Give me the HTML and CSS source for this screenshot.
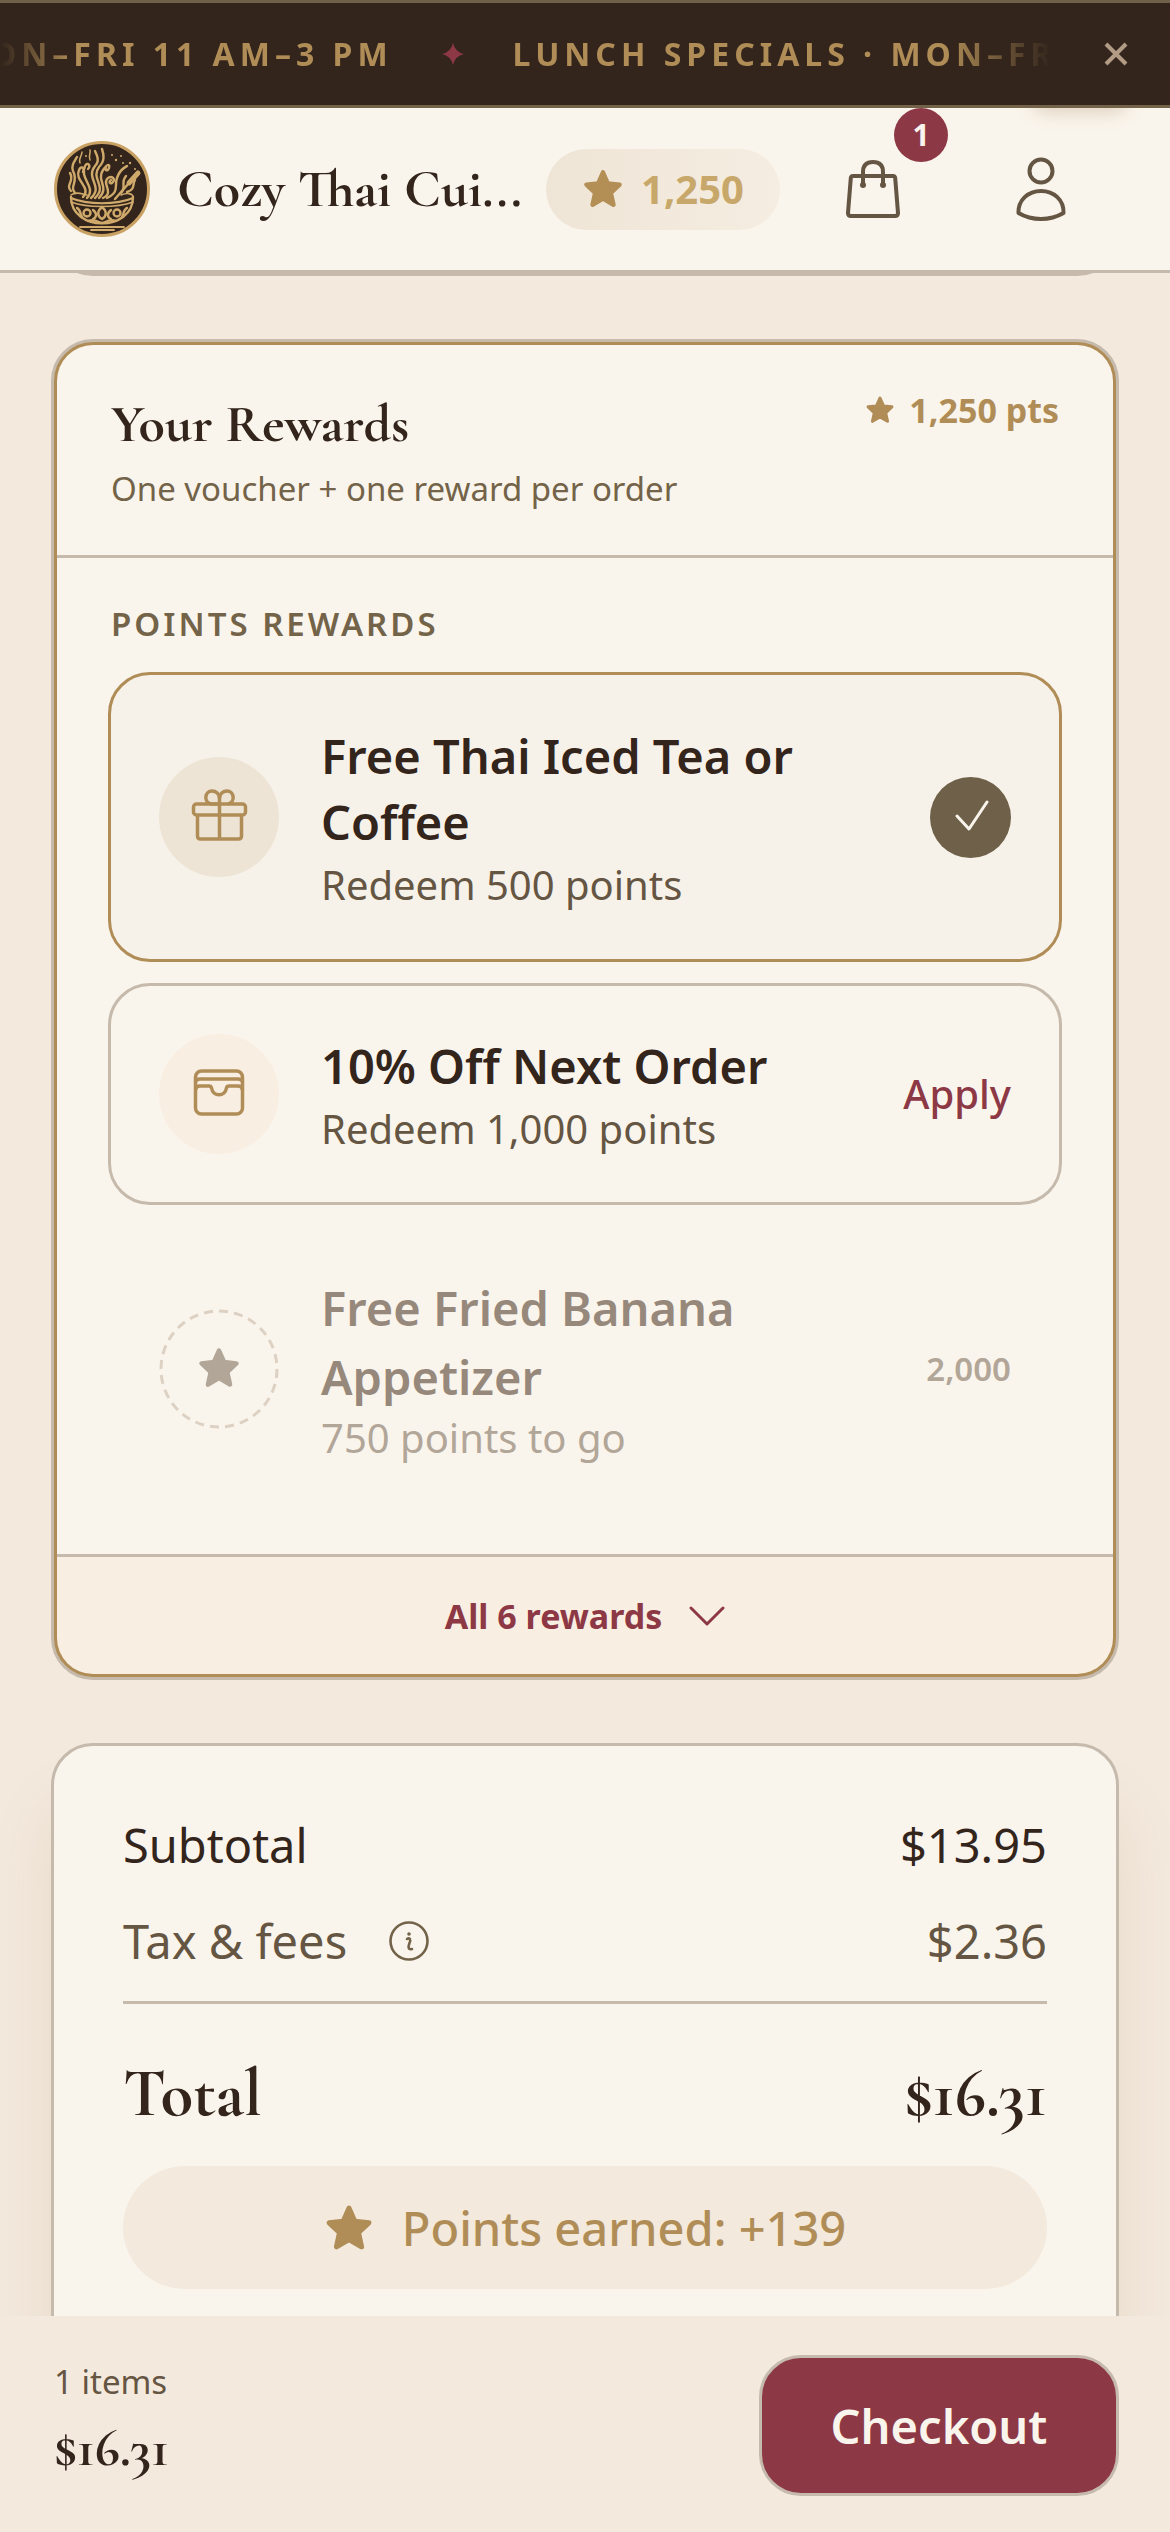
FILE: index.html
```html
<!DOCTYPE html>
<html lang="en">
<head>
  <meta charset="UTF-8">
  <meta name="viewport" content="width=device-width, initial-scale=1.0">
  <title>Cozy Thai Cuisine - Cart</title>
  <link rel="stylesheet" href="styles.css">
</head>
<body>

  <!-- shared shapes -->
  <svg class="defs" aria-hidden="true">
    <symbol id="star" viewBox="0 0 48 48">
      <path d="M24 5 L29.5 17.5 L43 19 L33 28.5 L36 42 L24 35 L12 42 L15 28.5 L5 19 L18.5 17.5 Z" fill="currentColor" stroke="currentColor" stroke-width="5" stroke-linejoin="round"/>
    </symbol>
  </svg>

  <div class="banner">
    <div class="ticker">
      <div class="ticker-track">
        <span>LUNCH SPECIALS · MON–FRI 11 AM–3 PM</span>
        <svg class="spark" viewBox="0 0 22 22"><path d="M11 0 Q13 9 22 11 Q13 13 11 22 Q9 13 0 11 Q9 9 11 0Z" fill="currentColor"/></svg>
        <span>LUNCH SPECIALS · MON–FRI 11 AM–3 PM</span>
      </div>
    </div>
    <button class="banner-close" type="button" aria-label="Close">
      <svg viewBox="0 0 24 24"><path d="M2 2 L22 22 M22 2 L2 22" fill="none" stroke="currentColor" stroke-width="4"/></svg>
    </button>
  </div>

  <header class="topbar">
    <svg class="logo" viewBox="0 0 96 96" aria-hidden="true">
      <circle cx="48" cy="48" r="46.5" fill="#33251c" stroke="#c9a263" stroke-width="3"/>
      <g fill="none" stroke="#d0aa6b" stroke-width="2.4" stroke-linecap="round">
        <path d="M29 56 C38 46 20 40 25 29 C27 24 31 27 29 31"/>
        <path d="M33 57 C43 46 25 38 31 25 C34 20 37 25 34 28"/>
        <path d="M37 57 C50 45 31 38 41 25 C46 20 43 14 41 10"/>
        <path d="M41 57 C54 45 36 38 45 26 C51 20 50 14 48 8"/>
        <path d="M45 57 C56 46 42 40 49 29 C54 22 56 23 55 27 C54 31 50 29 52 27"/>
        <path d="M49 57 C61 52 47 42 54 37 C59 34 62 39 58 42 C55 43 55 40 57 39"/>
        <path d="M53 57 C66 51 60 45 63 37 C66 28 70 27 73 25"/>
        <path d="M17 50 C11 44 21 40 16 32 M21 52 C15 45 25 41 19 30 C17 25 20 21 23 16"/>
        <path d="M67 52 C73 46 66 42 72 35 M73 51 C82 48 78 43 81 39"/>
        <path d="M26 22 C24 18 28 15 28 11 M36 19 C34 15 37 12 36 9" stroke-width="1.5"/>
        <path d="M61 58 L75 42"/>
        <path d="M75 42 L84 32" stroke-width="5"/>
        <path d="M17 54 C22 50 28 53 33 54 M67 54 C74 51 78 53 79 55" stroke-width="1.6"/>
        <path d="M17 57 C33 64 63 64 79 57" stroke-width="2.2"/>
        <path d="M17 61 C33 67 63 67 79 61" stroke-width="1.6"/>
        <path d="M17 56 C17 91 79 91 79 56"/>
        <path d="M48 66 C43 70 43 75 48 78 C53 75 53 70 48 66Z M39 69 C43 72 43 76 39 78 M57 69 C53 72 53 76 57 78"/>
        <circle cx="33" cy="72" r="3.5"/><circle cx="63" cy="72" r="3.5"/>
        <path d="M23 67 C26 68 26 72 28 76 M73 67 C70 68 70 72 68 76 M34 80 C42 77 44 82 48 82 C52 82 54 77 62 80"/>
        <path d="M26 86 H70 M37 89 H60" stroke-width="1.8"/>
      </g>
      <g fill="#d0aa6b">
        <circle cx="32" cy="15" r="1"/><circle cx="58" cy="14" r="1"/><circle cx="62" cy="19" r="1.2"/><circle cx="67" cy="15" r="1"/><circle cx="69" cy="22" r="1"/><circle cx="76" cy="22" r="1.2"/><circle cx="81" cy="28" r="1"/>
      </g>
    </svg>
    <h1 class="brand">Cozy Thai Cui...</h1>
    <a class="points-pill" href="#rewards"><svg class="star-md"><use href="#star"/></svg>1,250</a>
    <nav class="actions">
      <button class="icon-btn" type="button" aria-label="Cart">
        <svg viewBox="0 0 66 66"><g fill="none" stroke="currentColor" stroke-width="4" stroke-linecap="round" stroke-linejoin="round"><path d="M13 20 H53 Q55 20 55.200 22 L58 57 Q58 60 55 60 H11 Q8 60 8 57 L10.800 22 Q11 20 13 20Z"/><path d="M23 29 V16 Q23 6 33 6 Q43 6 43 16 V29"/></g><circle cx="23" cy="29" r="3" fill="currentColor"/><circle cx="43" cy="29" r="3" fill="currentColor"/></svg>
        <span class="badge">1</span>
      </button>
      <button class="icon-btn" type="button" aria-label="Account">
        <svg viewBox="0 0 66 66"><g fill="none" stroke="currentColor" stroke-width="4" stroke-linejoin="round"><circle cx="33" cy="15" r="11.500"/><path d="M10.500 57 C10 44 20 35 33 35 C46 35 56 44 55.500 57 C42 65 24 65 10.500 57Z"/></g></svg>
      </button>
    </nav>
  </header>

  <main>
    <div class="card prev-card"></div>

    <section class="rewards" id="rewards">
      <div class="rewards-head">
        <div>
          <h2>Your Rewards</h2>
          <p>One voucher + one reward per order</p>
        </div>
        <span class="rewards-pts"><svg class="star-sm"><use href="#star"/></svg>1,250 pts</span>
      </div>

      <div class="rewards-body">
        <h3>POINTS REWARDS</h3>
        <div class="reward selected">
          <span class="reward-icon">
            <svg viewBox="0 0 60 60"><g fill="none" stroke="currentColor" stroke-width="3.500" stroke-linejoin="round"><rect x="4.500" y="17" width="52" height="11" rx="3"/><path d="M8.500 28 V49 Q8.500 52 11.500 52 H49.500 Q52.500 52 52.500 49 V28 M30.500 8 V52"/><path d="M30.500 17 H22 C14 15 16 4 23 4 C27 4 30.500 7 30.500 11 C30.500 7 34 4 38 4 C45 4 47 15 39 17"/></g></svg>
          </span>
          <div class="reward-text">
            <h4>Free Thai Iced Tea or Coffee</h4>
            <p>Redeem 500 points</p>
          </div>
          <button class="check" type="button" aria-label="Remove reward"><svg viewBox="0 0 36 36"><path d="M4 17 L16 30 L34 3" fill="none" stroke="currentColor" stroke-width="3" stroke-linecap="round" stroke-linejoin="round"/></svg></button>
        </div>
        <div class="reward">
          <span class="reward-icon">
            <svg viewBox="0 0 60 60"><g fill="none" stroke="currentColor" stroke-width="3.500" stroke-linejoin="round"><rect x="6.500" y="7" width="47" height="43" rx="6"/><path d="M6.500 18 Q7 15 11 15 H49 Q53 15 53.500 18"/><path d="M6.500 26 Q7 22 11 22 H20 Q22 22 22.500 24 C24 33 36 33 37.500 24 Q38 22 40 22 H49 Q53 22 53.500 26"/></g></svg>
          </span>
          <div class="reward-text">
            <h4>10% Off Next Order</h4>
            <p>Redeem 1,000 points</p>
          </div>
          <button class="apply" type="button">Apply</button>
        </div>
        <div class="reward locked">
          <span class="reward-icon">
            <svg viewBox="0 0 120 120"><circle class="ring" cx="60" cy="60" r="58" pathLength="360"/><use href="#star" x="38" y="37" width="44" height="44"/></svg>
          </span>
          <div class="reward-text">
            <h4>Free Fried Banana Appetizer</h4>
            <p>750 points to go</p>
          </div>
          <span class="cost">2,000</span>
        </div>
      </div>

      <button class="all-rewards" type="button">All 6 rewards
        <svg viewBox="0 0 36 20"><path d="M2 2 L18 18 L34 2" fill="none" stroke="currentColor" stroke-width="3" stroke-linecap="round" stroke-linejoin="round"/></svg>
      </button>
    </section>

    <section class="card summary">
      <div class="row"><span>Subtotal</span><span>$13.95</span></div>
      <div class="row fees">
        <span class="fees-label">Tax &amp; fees
          <svg viewBox="0 0 42 42"><g fill="none" stroke="currentColor" stroke-width="2.600"><circle cx="21" cy="21" r="18.500"/><path d="M19 19 C22 17 23 20 21.500 23 C20 27 20 30 24 29" stroke-linecap="round"/></g><circle cx="21" cy="14" r="1.800" fill="currentColor"/></svg>
        </span>
        <span>$2.36</span>
      </div>
      <div class="total"><span>Total</span><span>$16.31</span></div>
      <div class="earned"><svg class="star-lg"><use href="#star"/></svg>Points earned: +139</div>
    </section>
  </main>

  <footer class="checkout-bar">
    <div>
      <p class="count">1 items</p>
      <p class="bar-price">$16.31</p>
    </div>
    <button class="checkout" type="button">Checkout</button>
  </footer>

</body>
</html>
```
FILE: styles.css
```css
* { box-sizing: border-box; }
body { margin: 0; background: #f3e9dd; color: #33251c; font-family: "Noto Sans", sans-serif; font-size: 47px; line-height: 66px; }
h1, h2, h3, h4, p { margin: 0; }
h1, h2, .total, .bar-price { font-family: "Cormorant Garamond", "Liberation Serif", serif; font-weight: 700; }
button { font-family: inherit; border: none; background: none; padding: 0; cursor: pointer; }
svg { display: block; flex-shrink: 0; }
.defs { position: absolute; width: 0; height: 0; }
.star-sm { width: 30px; height: 30px; }
.star-md { width: 42px; height: 42px; }
.star-lg { width: 50px; height: 50px; }

/* announcement */
.banner { position: relative; z-index: 3; display: flex; height: 108px; align-items: center; background: #33251c; border-top: 3px solid #6f6049; border-bottom: 3px solid #736349; }
.ticker { flex: 1; overflow: hidden; -webkit-mask-image: linear-gradient(to right, transparent, #000 7%, #000 89%, transparent 99%); mask-image: linear-gradient(to right, transparent, #000 7%, #000 89%, transparent 99%); }
.ticker-track { display: flex; align-items: center; width: max-content; transform: translateX(-422px); color: #b08d57; font-size: 32px; line-height: 48px; font-weight: 700; letter-spacing: 5px; white-space: nowrap; }
.spark { width: 22px; height: 22px; margin: 0 49px; color: #8d3845; }
.banner-close { width: 108px; height: 102px; display: flex; align-items: center; justify-content: center; color: #b39c86; }
.banner-close svg { width: 24px; height: 24px; }

/* header */
.topbar { position: relative; z-index: 2; display: flex; align-items: center; gap: 27px; height: 165px; padding: 0 63px 0 54px; background: #faf5ec; border-bottom: 3px solid #c5baac; }
.topbar::after { content: ""; position: absolute; top: -30px; right: 42px; width: 96px; height: 30px; border-radius: 30px; box-shadow: 0 4px 18px rgba(140, 90, 50, 0.25); }
.logo { width: 96px; height: 96px; }
.brand { flex: 1; min-width: 0; font-size: 54px; white-space: nowrap; }
.points-pill { display: flex; align-items: center; justify-content: center; gap: 17px; width: 234px; height: 81px; border-radius: 41px; background: linear-gradient(to right, #eee5d6, #f6ede2); color: #c8a76a; font-size: 40px; font-weight: 700; text-decoration: none; }
.points-pill svg { color: #b38f55; }
.actions { display: flex; gap: 36px; }
.icon-btn { position: relative; width: 132px; height: 132px; display: flex; align-items: center; justify-content: center; color: #655543; }
.icon-btn svg { width: 66px; height: 66px; }
.badge { position: absolute; top: -15px; right: -9px; width: 54px; height: 54px; border-radius: 50%; background: #8d3845; color: #faf5ec; font-size: 30px; line-height: 54px; font-weight: 700; text-align: center; }

main { padding: 0 51px; }
.card { background: #faf5ec; border: 3px solid #c5baac; border-radius: 42px; }
.prev-card { height: 120px; margin-top: -117px; margin-bottom: 63px; }

/* rewards */
.rewards { margin-bottom: 63px; border: 3px solid #c5baac; border-radius: 42px; background: #b08d57; padding: 3px; }
.rewards-head { display: flex; justify-content: space-between; padding: 48px 54px 42px; background: #faf5ec; border-bottom: 3px solid #c5baac; border-radius: 36px 36px 0 0; }
.rewards-head h2 { line-height: 62px; margin-bottom: 10px; font-size: 54px; }
.rewards-head p { font-size: 33px; line-height: 48px; color: #736349; }
.rewards-pts { display: flex; align-items: center; gap: 14px; height: 34px; color: #b08d57; font-size: 34px; line-height: 34px; font-weight: 700; }
.rewards-body { padding: 42px 51px 42px; background: #faf5ec; }
.rewards-body h3 { margin: 0 3px 24px; color: #736349; font-size: 33px; line-height: 48px; font-weight: 600; letter-spacing: 3px; }
.reward { display: flex; align-items: center; gap: 42px; margin-top: 21px; padding: 43px 48px; border: 3px solid #c5baac; border-radius: 42px; }
.reward.selected { margin-top: 0; padding: 44px 48px; border-color: #b08d57; background: #f7f2e9; }
.reward-icon { flex-shrink: 0; display: flex; align-items: center; justify-content: center; width: 120px; height: 120px; border-radius: 50%; background: #f9eee2; color: #b08d57; }
.reward-icon svg { width: 60px; height: 60px; }
.selected .reward-icon { background: #ede4d5; }
.reward-text { flex: 1; padding-top: 4px; }
.reward-text h4 { font-size: 47px; line-height: 66px; font-weight: 600; }
.reward-text p { font-size: 40px; line-height: 60px; color: #655543; }
.check { display: flex; align-items: center; justify-content: center; width: 81px; height: 81px; border-radius: 50%; background: #6f6049; color: #faf5ec; }
.check svg { width: 36px; height: 36px; }
.apply { color: #8d3845; font-size: 40px; line-height: 60px; font-weight: 500; }
.reward.locked { padding: 45px 48px; border-color: transparent; color: #97887c; }
.locked .reward-icon { background: none; color: #b2a699; }
.locked .reward-icon svg { width: 120px; height: 120px; }
.ring { fill: none; stroke: #ddd1c3; stroke-width: 3; stroke-dasharray: 9 6; }
.locked .reward-text { padding-top: 0; }
.locked h4 { line-height: 69px; }
.locked p { line-height: 52px; color: #b2a699; }
.cost { color: #b2a699; font-size: 33px; font-weight: 600; }
.all-rewards { display: flex; align-items: center; justify-content: center; gap: 27px; width: 100%; height: 120px; border-top: 3px solid #c5baac; border-radius: 0 0 36px 36px; background: #f9eee2; color: #8d3845; font-size: 34px; font-weight: 700; }
.all-rewards svg { width: 36px; height: 20px; }

/* order summary */
.summary { padding: 66px 69px; box-shadow: 0 60px 60px rgba(176, 141, 87, 0.16); }
.row { display: flex; justify-content: space-between; margin-bottom: 30px; }
.fees { margin-bottom: 0; padding-bottom: 27px; border-bottom: 3px solid #c5baac; color: #655543; }
.fees-label { display: flex; align-items: center; gap: 41px; }
.fees-label svg { width: 42px; height: 42px; color: #736349; }
.total { display: flex; justify-content: space-between; margin: 54px 0 36px; font-size: 67px; line-height: 72px; }
.earned { display: flex; align-items: center; justify-content: center; gap: 28px; height: 123px; border-radius: 62px; background: #f3e9dd; color: #b08d57; font-weight: 500; }

/* sticky bar */
.checkout-bar { position: fixed; z-index: 4; left: 0; right: 0; bottom: 0; display: flex; justify-content: space-between; padding: 39px 51px 36px 54px; background: #f3e9dd; }
.count { font-size: 33px; line-height: 54px; color: #655543; }
.bar-price { margin-top: 12px; font-size: 54px; line-height: 54px; }
.checkout { width: 360px; height: 141px; border: 3px solid #c5baac; border-radius: 42px; background: #8d3845; color: #faf5ec; font-size: 47px; font-weight: 600; }
```
